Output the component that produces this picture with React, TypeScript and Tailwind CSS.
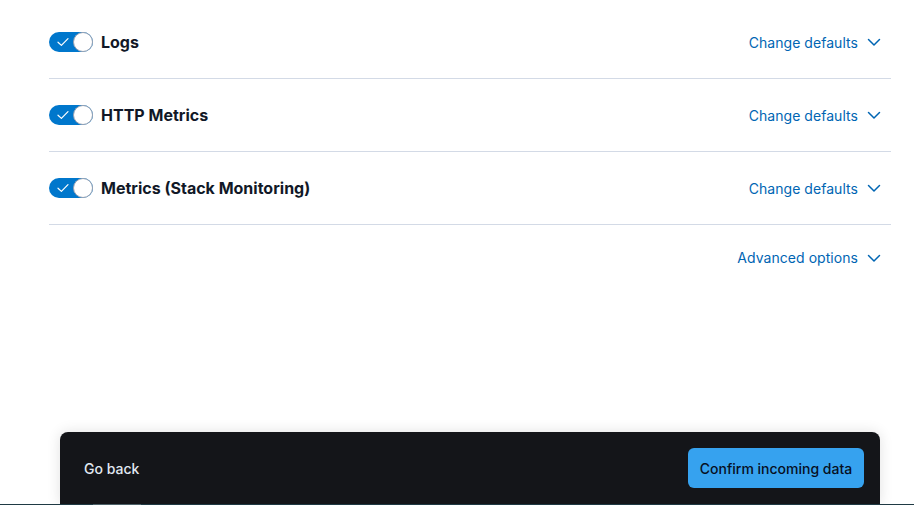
import React from "react";

function Toggle() {
  return (
    <div className="relative w-[44px] h-[20px] rounded-full bg-[#0077cc] shrink-0">
      <svg className="absolute left-[8px] top-[5px]" width="12" height="10" viewBox="0 0 12 10" fill="none">
        <path d="M1 5.2 L4.4 8.4 L11 1.6" stroke="white" strokeWidth="1.2" strokeLinecap="round" strokeLinejoin="round" />
      </svg>
      <div className="absolute right-0 top-0 w-[20px] h-[20px] rounded-full bg-white border border-[#98a2b3]" />
    </div>
  );
}

function Chevron() {
  return (
    <svg width="16" height="16" viewBox="0 0 16 16" fill="none" className="shrink-0">
      <path d="M2.5 5.5 L8 11 L13.5 5.5" stroke="#0065b3" strokeWidth="1.5" strokeLinecap="round" strokeLinejoin="round" />
    </svg>
  );
}

function Row({ title }: { title: string }) {
  return (
    <div className="h-[72px] border-b border-[#d3dae6] flex items-center justify-between box-content">
      <div className="flex items-center gap-[8px]">
        <Toggle />
        <span className="text-[16px] font-bold text-[#111827]">{title}</span>
      </div>
      <button className="flex items-center gap-[8px] mr-[9px] text-[14px] text-[#0065b3] tracking-[0.05px]">
        <span>Change defaults</span>
        <Chevron />
      </button>
    </div>
  );
}

export default function App() {
  return (
    <div
      className="h-[505px] w-[914px] bg-white flex flex-col overflow-hidden"
      style={{ fontFamily: "Inter, 'Noto Sans', sans-serif" }}
    >
      <div className="ml-[49px] w-[842px] pt-[6px]">
        <Row title="Logs" />
        <Row title="HTTP Metrics" />
        <Row title="Metrics (Stack Monitoring)" />
        <div className="flex justify-end pt-[22px]">
          <button className="flex items-center gap-[8px] mr-[9px] text-[14px] text-[#0065b3] tracking-[0.05px]">
            <span>Advanced options</span>
            <Chevron />
          </button>
        </div>
      </div>
      <div className="mt-auto ml-[60px] w-[820px] h-[72px] bg-[#141519] rounded-t-[8px] shadow-[0_0_14px_rgba(0,0,0,0.12)] flex items-center justify-between px-[16px]">
        <span className="ml-[8px] text-[14px] font-medium text-[#e1e8f2]">Go back</span>
        <button className="h-[40px] w-[176px] rounded-[6px] bg-[#36a2ef] text-[14px] font-medium text-[#07101f]">
          Confirm incoming data
        </button>
      </div>
      <div className="h-[1px] bg-[#1f3a44] flex">
        <div className="ml-[93px] w-[48px] bg-[#4c6168]" />
      </div>
    </div>
  );
}
